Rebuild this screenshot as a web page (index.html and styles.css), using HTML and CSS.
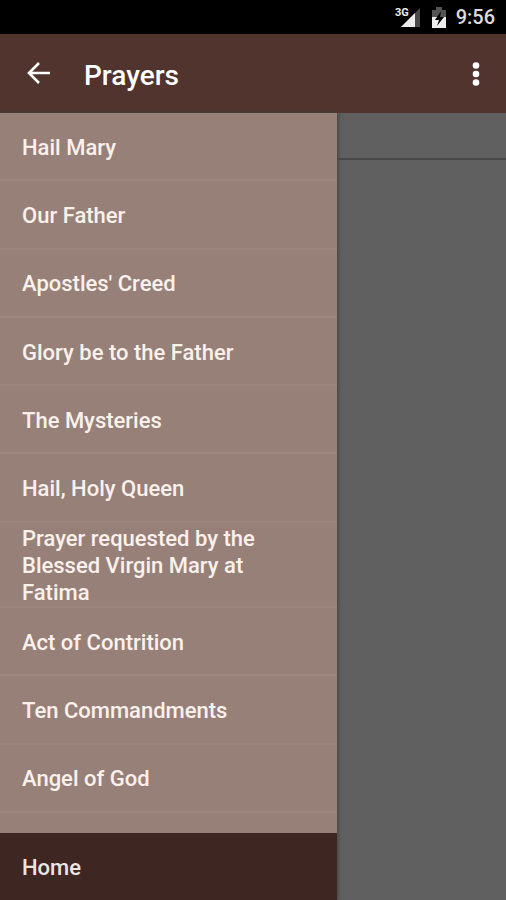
FILE: index.html
```
<!DOCTYPE html>
<html lang="en">

<head>
    <meta charset="UTF-8">
    <meta name="viewport" content="width=device-width, initial-scale=1.0">
    <title>Prayers</title>
    <link rel="stylesheet" href="styles.css">
</head>

<body>
    <!-- status bar -->
    <div class="status">
        <svg class="signal" viewBox="0 0 26 22" aria-hidden="true">
            <path d="M25 2V21H6z" fill="#4a4a4a" />
            <path d="M20 7V21H6z" fill="#eee" />
            <text x="0" y="10">3G</text>
        </svg>
        <svg class="battery" viewBox="0 0 14 21" aria-hidden="true">
            <path d="M4 0H10V3H14V11H0V3H4z" fill="#555" />
            <path d="M0 10H14V21H0z" fill="#eee" />
            <path d="M9 4L3 13H7L5 19L12 10H8z" fill="#000" />
        </svg>
        <span class="time">9:56</span>
    </div>
    <header class="toolbar">
        <button class="icon_btn" type="button" aria-label="Back">
            <svg viewBox="0 0 24 24" width="24" height="24" fill="none" stroke="#fff" stroke-width="2.6">
                <path d="M24 11H3M13 1L3 11L13 21" />
            </svg>
        </button>
        <h1>Prayers</h1>
        <button class="icon_btn" type="button" aria-label="More options">
            <svg viewBox="0 0 8 24" width="8" height="24" fill="#fff">
                <circle cx="4" cy="3.5" r="3.3" />
                <circle cx="4" cy="12" r="3.3" />
                <circle cx="4" cy="20.5" r="3.3" />
            </svg>
        </button>
    </header>
    <main class="main">
        <!-- drawer -->
        <nav class="drawer">
            <ul class="list">
                <li><a href="#hail-mary">Hail Mary</a></li>
                <li><a href="#our-father">Our Father</a></li>
                <li><a href="#creed">Apostles' Creed</a></li>
                <li><a href="#glory-be">Glory be to the Father</a></li>
                <li><a href="#mysteries">The Mysteries</a></li>
                <li><a href="#holy-queen">Hail, Holy Queen</a></li>
                <li><a href="#fatima">Prayer requested by the Blessed Virgin Mary at Fatima</a></li>
                <li><a href="#contrition">Act of Contrition</a></li>
                <li><a href="#commandments">Ten Commandments</a></li>
                <li><a href="#angel">Angel of God</a></li>
            </ul>
            <a class="home" href="#home">Home</a>
        </nav>
        <!-- dimmed page behind the drawer -->
        <div class="content">
            <div class="content_head"></div>
        </div>
    </main>
</body>

</html>
```
FILE: styles.css
```
* {
    box-sizing: border-box;
    margin: 0;
    padding: 0;
}

body {
    display: flex;
    flex-direction: column;
    min-height: 100vh;
    font-family: Roboto, "Liberation Sans", sans-serif;
    color: #fff;
    background-color: #606060;
}

a {
    text-decoration: none;
    color: #fbf1ec;
}

.status {
    display: flex;
    align-items: center;
    justify-content: flex-end;
    height: 34px;
    padding-right: 11px;
    background-color: #000;
}

.signal {
    width: 26px;
    height: 22px;
    margin-right: 11px;
}

.signal text {
    font-size: 11px;
    font-weight: 700;
    fill: #eee;
    stroke: #000;
    stroke-width: 1px;
    paint-order: stroke;
}

.battery {
    width: 14px;
    height: 21px;
    margin-right: 10px;
}

.time {
    font-size: 20px;
    font-weight: 500;
    color: #ddd;
}

.toolbar {
    display: flex;
    align-items: center;
    height: 79px;
    padding: 0 26px;
    background-color: #51342e;
}

.toolbar h1 {
    flex: 1;
    margin-left: 34px;
    padding-top: 3px;
    font-size: 28px;
    font-weight: 500;
}

.icon_btn {
    display: flex;
    border: 0;
    background: none;
    cursor: pointer;
}

.main {
    flex: 1;
    display: flex;
}

.drawer {
    display: flex;
    flex-direction: column;
    width: calc(100% / 3 * 2);
    font-size: 22px;
    font-weight: 500;
    line-height: 27px;
    background-color: #978078;
    box-shadow: 1px 0 4px #3c443e;
}

.list {
    flex: 1;
    display: flex;
    flex-direction: column;
    padding-bottom: 20px;
    list-style: none;
}

.list li {
    flex: 1 0 auto;
    display: flex;
    border-bottom: 2px solid #9d847d;
}

.list a {
    flex: 1;
    display: flex;
    align-items: center;
    min-height: 66px;
    padding: 2px 60px 0 22px;
}

.home {
    display: flex;
    align-items: center;
    height: 67px;
    padding: 2px 22px 0;
    color: #eee5e2;
    background-color: #3e2622;
}

.content {
    flex: 1;
}

.content_head {
    height: 47px;
    border-bottom: 2px solid #484848;
}
```
